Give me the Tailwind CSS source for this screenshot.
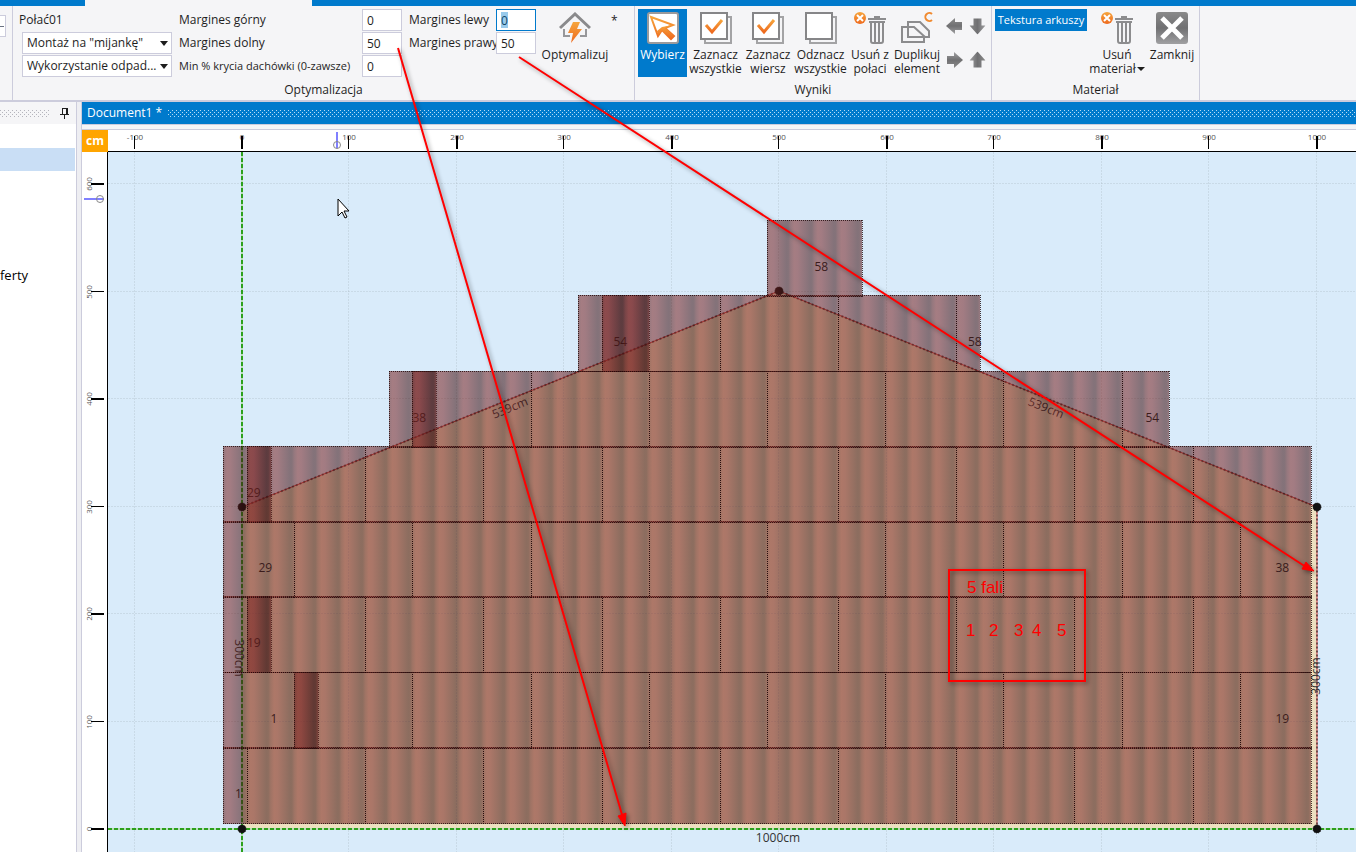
<!DOCTYPE html>
<html lang="pl">
<head>
    <meta charset="UTF-8">
    <meta name="viewport" content="width=device-width, initial-scale=1.0">
    <title>Document1</title>
    <script src="https://cdn.jsdelivr.net/npm/@tailwindcss/browser@4"></script>
</head>
<body class="relative flex h-screen flex-col overflow-hidden bg-[#eeeef2] font-['Open_Sans',sans-serif] text-xs text-[#1e1e1e]">
    <svg class="absolute size-0" aria-hidden="true">
        <defs>
            <linearGradient id="orange" x1="0" y1="0" x2="0" y2="1">
                <stop offset="0" stop-color="#f6a53c"/><stop offset="1" stop-color="#ee6a1f"/>
            </linearGradient>
            <linearGradient id="gray" x1="0" y1="0" x2="0" y2="1">
                <stop offset="0" stop-color="#8a8a8a"/><stop offset=".5" stop-color="#707072"/><stop offset="1" stop-color="#a0a0a2"/>
            </linearGradient>
            <pattern id="dots-gray" width="4" height="4" patternUnits="userSpaceOnUse">
                <rect width="1" height="1" fill="#b4b4bc"/><rect x="2" y="2" width="1" height="1" fill="#b4b4bc"/>
            </pattern>
            <pattern id="dots-blue" width="4" height="4" patternUnits="userSpaceOnUse">
                <rect width="1" height="1" fill="#b8dcf4"/><rect x="2" y="2" width="1" height="1" fill="#b8dcf4"/>
            </pattern>
            <symbol id="i-sheets" viewBox="0 0 32 32">
                <path d="M5 28v3h26V5h-3" fill="none" stroke="#a3a3a5" stroke-width="2"/>
                <rect x="1" y="1" width="26" height="26" fill="#fff" stroke="#868688" stroke-width="2"/>
            </symbol>
            <symbol id="i-trash" viewBox="0 0 32 32">
                <circle cx="6" cy="6" r="6" fill="url(#orange)"/>
                <path d="M3 3l6 6M9 3L3 9" stroke="#fff" stroke-width="2"/>
                <path d="M14 7h18M20 5h6" stroke="#8c8c8e" stroke-width="2" fill="none"/>
                <path d="M15 10h16" stroke="#8c8c8e" stroke-width="2"/>
                <path d="M17 11v18q0 2 2 2h8q2 0 2-2V11M21 11v19M25 11v19" stroke="#8c8c8e" stroke-width="2" fill="none"/>
            </symbol>
            <symbol id="i-arrow" viewBox="0 0 17 16">
                <path d="M0 8L9 0v4h7v8H9v4z" fill="url(#gray)"/>
            </symbol>
        </defs>
    </svg>

    <!-- Ribbon -->
    <header class="shrink-0 border-b-2 border-[#ccccdc] bg-[#f5f5f7]">
        <div class="flex h-[6px]">
            <div class="w-[85px] bg-[#007acc]"></div>
            <div class="w-[227px]"></div>
            <div class="flex-1 bg-[#007acc]"></div>
        </div>
        <div class="flex h-[94px]">
            <div class="w-[13px] shrink-0 border-r border-[#ccccdc] pt-[9px]">
                <div class="flex h-[22px] w-[6px] items-center border border-l-0 border-[#ccccdc] bg-white"><span class="h-px w-1 bg-gray-500"></span></div>
            </div>

            <section class="flex w-[622px] shrink-0 flex-col border-r border-[#ccccdc] pt-[3px]">
                <div class="flex h-[68px] pl-[6px]">
                    <div class="grid w-[160px] grid-rows-3 gap-px">
                        <span class="self-center">Połać01</span>
                        <div class="relative ml-[3px] w-[150px]">
                            <select aria-label="Montaż" class="h-[22px] w-full appearance-none border border-[#ccccdc] bg-white pl-[4px]"><option>Montaż na "mijankę"</option></select>
                            <svg class="pointer-events-none absolute top-[9px] right-[4px] h-[5px] w-[8px]" viewBox="0 0 8 5"><path d="M0 0h8L4 5z" fill="#1e1e1e"/></svg>
                        </div>
                        <div class="relative ml-[3px] w-[150px]">
                            <select aria-label="Wykorzystanie odpadów" class="h-[22px] w-full appearance-none border border-[#ccccdc] bg-white pl-[4px]"><option>Wykorzystanie odpad...</option></select>
                            <svg class="pointer-events-none absolute top-[9px] right-[4px] h-[5px] w-[8px]" viewBox="0 0 8 5"><path d="M0 0h8L4 5z" fill="#1e1e1e"/></svg>
                        </div>
                    </div>
                    <div class="grid grid-cols-[183px_40px] grid-rows-3 items-center gap-y-px whitespace-nowrap">
                        <label for="m-top">Margines górny</label>
                        <input id="m-top" value="0" class="h-[22px] w-full border border-[#ccccdc] bg-white px-[4px]">
                        <label for="m-bottom">Margines dolny</label>
                        <input id="m-bottom" value="50" class="h-[22px] w-full border border-[#ccccdc] bg-white px-[4px]">
                        <label for="min-cover" class="text-[11px]">Min % krycia dachówki (0-zawsze)</label>
                        <input id="min-cover" value="0" class="h-[22px] w-full border border-[#ccccdc] bg-white px-[4px]">
                    </div>
                    <div class="ml-[7px] grid grid-cols-[87px_40px] grid-rows-3 items-center gap-y-px whitespace-nowrap">
                        <label for="m-left">Margines lewy</label>
                        <div class="relative">
                            <input id="m-left" value="0" class="h-[22px] w-full border border-[#007acc] bg-white px-[4px]">
                            <span class="pointer-events-none absolute top-[3px] left-[5px] h-4 w-[7px] bg-[#007acc]/40"></span>
                        </div>
                        <label for="m-right">Margines prawy</label>
                        <input id="m-right" value="50" class="h-[22px] w-full border border-[#ccccdc] bg-white px-[4px]">
                    </div>
                    <button class="ml-[3px] flex w-[72px] flex-col items-center gap-1 pt-[3px] leading-[14px]">
                        <svg class="size-8" viewBox="0 0 32 32">
                            <path d="M1 16L16 2l15 14" fill="none" stroke="#8a8a8c" stroke-width="3"/>
                            <path d="M5 17v7h6M27 17v7h-6" fill="none" stroke="#97979a" stroke-width="2"/>
                            <path d="M14 10h7l-3 7h5L12 31l2-10H9z" fill="url(#orange)"/>
                        </svg>
                        Optymalizuj
                    </button>
                    <span class="pt-1">*</span>
                </div>
                <h2 class="mt-[5px] text-center leading-4">Optymalizacja</h2>
            </section>

            <section class="flex w-[357px] shrink-0 flex-col border-r border-[#ccccdc] pt-[3px]">
                <div class="flex h-[68px] pl-[3px] leading-[14px]">
                    <button class="flex w-[49px] flex-col items-center gap-1 bg-[#007acc] pt-[3px] text-white">
                        <svg class="size-8" viewBox="0 0 32 32">
                            <rect x="1" y="1" width="30" height="30" rx="2" fill="#fff" stroke="#9a9a9c" stroke-width="2"/>
                            <path d="M4 5l22 8-8 3 9 8-3 3-9-9-4 6z" fill="#fff" stroke="url(#orange)" stroke-width="2"/>
                            <path d="M15 15l11-2-8 3 9 8-3 3-9-9-4 6-1-5z" fill="url(#orange)"/>
                        </svg>
                        Wybierz
                    </button>
                    <button class="flex w-[57px] flex-col items-center gap-1 pt-[3px]">
                        <svg class="size-8" viewBox="0 0 32 32"><use href="#i-sheets"/><path d="M6 13l6 7 10-12" fill="none" stroke="url(#orange)" stroke-width="3"/></svg>
                        <span>Zaznacz<br>wszystkie</span>
                    </button>
                    <button class="flex w-[48px] flex-col items-center gap-1 pt-[3px]">
                        <svg class="size-8" viewBox="0 0 32 32"><use href="#i-sheets"/><path d="M6 13l6 7 10-12" fill="none" stroke="url(#orange)" stroke-width="3"/></svg>
                        <span>Zaznacz<br>wiersz</span>
                    </button>
                    <button class="flex w-[57px] flex-col items-center gap-1 pt-[3px]">
                        <svg class="size-8" viewBox="0 0 32 32"><use href="#i-sheets"/></svg>
                        <span>Odznacz<br>wszystkie</span>
                    </button>
                    <button class="flex w-[42px] flex-col items-center gap-1 pt-[3px]">
                        <svg class="size-8" viewBox="0 0 32 32"><use href="#i-trash"/></svg>
                        <span>Usuń z<br>połaci</span>
                    </button>
                    <button class="flex w-[52px] flex-col items-center gap-1 pt-[3px]">
                        <svg class="size-8" viewBox="0 0 32 32">
                            <g fill="none" stroke="#8c8c8e" stroke-width="2">
                                <path d="M7 25V10h12l9 9v6z"/>
                                <path d="M7 15H1v15h22v-5M7 15h6l11 10"/>
                            </g>
                            <path d="M31 2a4 4 0 1 0 0 6" fill="none" stroke="#f08a30" stroke-width="2"/>
                        </svg>
                        <span>Duplikuj<br>element</span>
                    </button>
                    <div class="grid w-[46px] grid-cols-2 grid-rows-2 place-items-center">
                        <button aria-label="W lewo"><svg class="h-4 w-[17px]"><use href="#i-arrow"/></svg></button>
                        <button aria-label="W dół"><svg class="h-4 w-[17px] -rotate-90"><use href="#i-arrow"/></svg></button>
                        <button aria-label="W prawo"><svg class="h-4 w-[17px] rotate-180"><use href="#i-arrow"/></svg></button>
                        <button aria-label="W górę"><svg class="h-4 w-[17px] rotate-90"><use href="#i-arrow"/></svg></button>
                    </div>
                </div>
                <h2 class="mt-[5px] text-center leading-4">Wyniki</h2>
            </section>

            <section class="flex w-[208px] shrink-0 flex-col border-r border-[#ccccdc] pt-[3px]">
                <div class="flex h-[68px] items-start pl-[3px] leading-[14px]">
                    <button class="h-[22px] w-[92px] bg-[#007acc] text-[11px] whitespace-nowrap text-white">Tekstura arkuszy</button>
                    <button class="flex w-[60px] flex-col items-center gap-1 pt-[3px]">
                        <svg class="size-8" viewBox="0 0 32 32"><use href="#i-trash"/></svg>
                        <span>Usuń<br><span class="flex items-center gap-px">materiał<svg class="h-[4px] w-[8px]" viewBox="0 0 8 4"><path d="M0 0h8L4 4z" fill="#1e1e1e"/></svg></span></span>
                    </button>
                    <button class="flex w-[50px] flex-col items-center gap-1 pt-[3px]">
                        <svg class="size-8" viewBox="0 0 32 32"><rect width="32" height="32" rx="3" fill="url(#gray)"/><path d="M6 6l20 20M26 6L6 26" stroke="#fff" stroke-width="5"/></svg>
                        Zamknij
                    </button>
                </div>
                <h2 class="mt-[5px] text-center leading-4">Materiał</h2>
            </section>
        </div>
    </header>

    <div class="flex min-h-0 flex-1">
        <!-- Side panel -->
        <aside class="w-[77px] shrink-0 border-r border-[#ccccdc] bg-white">
            <div class="flex h-[22px] items-center bg-[#f5f5f7]">
                <svg class="h-[7px] w-[50px]"><rect width="50" height="7" fill="url(#dots-gray)"/></svg>
                <svg class="ml-[10px] h-[12px] w-[9px]" viewBox="0 0 9 12"><path d="M2 7V1h5v6M0 7h9M4 7v5M6 1v6" fill="none" stroke="#1e1e1e" stroke-width="1" shape-rendering="crispEdges"/></svg>
            </div>
            <div class="mt-6 h-[23px] w-[75px] bg-[#c9def5]"></div>
            <p class="mt-[94px] text-[13px] leading-5 text-black">ferty</p>
        </aside>

        <!-- Document -->
        <main class="ml-[4px] flex min-w-0 flex-1 flex-col border-l border-[#ccccdc]">
            <div class="flex h-[22px] shrink-0 items-center gap-[6px] bg-[#007acc] pl-[5px] text-white">
                <span>Document1 *</span>
                <svg class="h-[7px] min-w-0 flex-1"><rect width="100%" height="7" fill="url(#dots-blue)"/></svg>
            </div>
            <div class="h-[6px] shrink-0 border-y border-[#ccccdc] bg-[#f5f5f7]"></div>
            <div class="grid min-h-0 flex-1 grid-cols-[26px_minmax(0,1fr)] grid-rows-[22px_minmax(0,1fr)] bg-white">
                <div class="flex items-center justify-center bg-[#ffa500] font-bold text-white">cm</div>
                <svg id="ruler-x" class="h-full w-full border-b border-black"></svg>
                <svg id="ruler-y" class="h-full w-full border-r border-black"></svg>
                <svg id="plan" class="h-full w-full bg-[#d9ebfa]">
                    <defs>
                        <linearGradient id="wave" gradientUnits="userSpaceOnUse" x1="139" x2="162.64" y1="0" y2="0" spreadMethod="repeat">
                            <stop offset="0" stop-color="#5f1a19"/>
                            <stop offset=".15" stop-color="#7a2220"/>
                            <stop offset=".3" stop-color="#752020"/>
                            <stop offset=".82" stop-color="#3e0f10"/>
                            <stop offset=".9" stop-color="#401010"/>
                            <stop offset="1" stop-color="#5f1a19"/>
                        </linearGradient>
                    </defs>
                </svg>
            </div>
        </main>
    </div>

    <!-- Notes drawn over the window -->
    <svg class="pointer-events-none absolute inset-0 h-full w-full">
        <g class="drop-shadow-[2px_2px_2px_rgba(0,0,0,0.4)]" stroke="#f00" stroke-width="2" fill="none">
            <path d="M398 48L623 818"/>
            <path d="M519 57L1306 567"/>
            <path d="M625 826l-7-10 8-3z" fill="#f00" stroke-width="1"/>
            <path d="M1314 571l-12-2 4-7z" fill="#f00" stroke-width="1"/>
            <rect x="949" y="570" width="136" height="111"/>
        </g>
        <g class="font-['Liberation_Sans',sans-serif] text-[17px]" fill="#f00">
            <text x="967" y="593">5 fali</text>
            <text x="966" y="636">1</text>
            <text x="989" y="636">2</text>
            <text x="1014" y="636">3</text>
            <text x="1032" y="636">4</text>
            <text x="1057" y="636">5</text>
        </g>
        <path d="M338 199v17l4-4 3 6 2-1-3-6h5z" fill="#fff" stroke="#000"/>
    </svg>

    <script>
        const plan = document.getElementById('plan');
        const rulerX = document.getElementById('ruler-x');
        const rulerY = document.getElementById('ruler-y');

        const originX = 134, originY = 677; // point 0,0 inside the plan
        const meter = 107.45;               // 100 cm in pixels
        const waveX = 139, waveWidth = 23.64;
        const rowHeight = 75.3, sheetHeight = 77;

        // Sheets per row from the eaves up: [first wave, last wave, label]
        const rows = [
            { first: [-1, 0, '1'], start: 0, end: 45 },
            { first: [-1, 3, '1'], start: 2, end: 45, last: '19' },
            { first: [-1, 1, '19'], start: 0, end: 45 },
            { first: [-1, 2, '29'], start: 2, end: 45, last: '38' },
            { first: [-1, 1, '29'], start: 0, end: 45 },
            { first: [6, 8, '38'], start: 7, end: 39, last: '54' },
            { first: [14, 17, '54'], start: 15, end: 31, last: '58' },
            { first: [22, 26, '58'], start: 26, end: 26 },
        ];

        // Rulers
        let x = '', y = '', grid = '';
        const planWidth = window.innerWidth - 108;
        for (let i = -1; originX + i * meter < planWidth - 12; i++) {
            const px = Math.round(originX + i * meter);
            x += `<text x="${px}" y="10" text-anchor="middle" font-size="8" fill="#555">${i * 100}</text>
                  <path d="M${i % 2 ? (px - 1) + '.5' : px} 6v13" stroke="#000" stroke-width="${i % 2 ? 1 : 2}"/>`;
            grid += `<path d="M${px - 1}.5 0v2000"/>`;
        }
        for (let i = 0; i <= 6; i++) {
            const py = Math.round(originY - i * meter);
            y += `<text transform="translate(10 ${py}) rotate(-90)" text-anchor="middle" font-size="8" fill="#555">${i * 100}</text>
                  <path d="M9 ${i % 2 ? (py - 1) + '.5' : py}h13" stroke="#000" stroke-width="${i % 2 ? 1 : 2}"/>`;
            grid += `<path d="M0 ${py - 1}.5h4000"/>`;
        }
        rulerX.innerHTML = `${x}<path d="M229 2v16" stroke="#8080ff" stroke-width="2"/><circle cx="229" cy="15" r="3.5" fill="none" stroke="#888"/>`;
        rulerY.innerHTML = `${y}<path d="M2 47h20" stroke="#8080ff" stroke-width="2"/><circle cx="18" cy="47" r="3.5" fill="none" stroke="#888"/>`;

        // Roof plane, axes and dimensions
        const outline = [[134, 677], [134, 355], [671, 139], [1209, 355], [1209, 677]];
        let svg = `
            <polygon points="${outline.join(' ')}" fill="#ece0c0"/>
            <g stroke="#9aa8b0" stroke-opacity=".25" stroke-dasharray="2 1">${grid}</g>
            <polygon points="${outline.join(' ')}" fill="none" stroke="#e04040"/>
            <polygon points="${outline.join(' ')}" fill="none" stroke="#202020" stroke-width="2" stroke-opacity=".6" stroke-dasharray="2 2"/>
            <path d="M134 0v2000M0 677h4000" stroke="#b8dcb8" stroke-width="2"/>
            <path d="M134 0v2000M0 677h4000" stroke="#2ca01c" stroke-width="2" stroke-dasharray="4 2"/>`;
        outline.forEach(([nx, ny]) => {
            svg += `<circle cx="${nx}" cy="${ny}" r="4" fill="#111" stroke="#111" stroke-dasharray="1 1"/>`;
        });
        const dims = [['539cm', 402, 256, -22], ['539cm', 938, 256, 22], ['300cm', 131, 506, 90], ['300cm', 1208, 524, -90], ['1000cm', 670, 686, 0]];
        dims.forEach(([text, dx, dy, angle]) => {
            svg += `<text transform="translate(${dx} ${dy}) rotate(${angle})" y="4" text-anchor="middle" fill="#333">${text}</text>`;
        });

        // Sheets
        function sheet(row, from, to, label) {
            const left = Math.round(waveX + from * waveWidth);
            const right = Math.round(waveX + to * waveWidth);
            const top = Math.round(originY - 5 - sheetHeight - row * rowHeight);
            svg += `<rect x="${left}" y="${top}" width="${right - left}" height="${sheetHeight}" fill="url(#wave)" fill-opacity=".55"/>
                    <path d="M${left} ${top}.5H${right}M${left} ${top + sheetHeight - 1}.5H${right}M${left}.5 ${top}v${sheetHeight}M${right}.5 ${top}v${sheetHeight}" fill="none" stroke="#1c0808" stroke-opacity=".8" stroke-dasharray="1 1"/>`;
            if (label) {
                svg += `<text x="${(left + right) / 2}" y="${top + 51}" fill="#3a1c1c">${label}</text>`;
            }
        }
        rows.forEach((row, i) => {
            sheet(i, ...row.first);
            for (let s = row.start; s < row.end; s += 5) {
                const e = Math.min(s + 5, row.end);
                sheet(i, s, e, e === row.end ? row.last : '');
            }
        });
        plan.insertAdjacentHTML('beforeend', svg);
    </script>
</body>
</html>
